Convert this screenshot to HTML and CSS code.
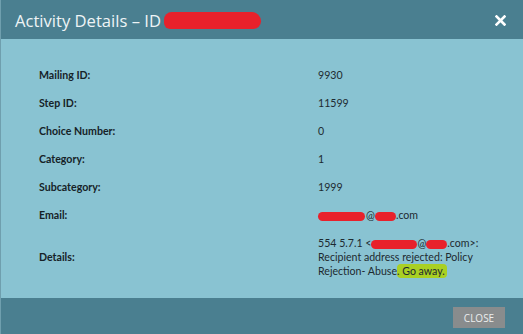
FILE: index.html
```html
<!DOCTYPE html>
<html lang="en">

<head>
    <meta charset="UTF-8" />
    <meta name="viewport" content="width=device-width, initial-scale=1.0" />
    <title>Activity Details</title>
    <link rel="stylesheet" href="styles.css">
</head>

<body>
    <div class="dialog">
        <div class="dialog-header">
            <h1 class="title">Activity Details – ID <span class="scribble scribble-title"></span></h1>
            <button class="close-x" aria-label="Close">
                <svg width="11" height="11" viewBox="0 0 11 11">
                    <path d="M1.5 1.5 L9.5 9.5 M9.5 1.5 L1.5 9.5" stroke="#fff" stroke-width="2.6" stroke-linecap="square" />
                </svg>
            </button>
        </div>

        <div class="dialog-body">
            <div class="details">
                <div class="label">Mailing ID:</div>
                <div class="value">9930</div>

                <div class="label">Step ID:</div>
                <div class="value">11599</div>

                <div class="label">Choice Number:</div>
                <div class="value">0</div>

                <div class="label">Category:</div>
                <div class="value">1</div>

                <div class="label">Subcategory:</div>
                <div class="value">1999</div>

                <div class="label">Email:</div>
                <div class="value"><span class="scribble scribble-user"></span>@<span class="scribble scribble-domain"></span>.com</div>

                <div class="label">Details:</div>
                <div class="value">554 5.7.1 &lt;<span class="scribble scribble-user2"></span>@<span class="scribble scribble-domain2"></span>.com&gt;:<br>Recipient address rejected: Policy<br>Rejection- Abuse<span class="highlight">. Go away.</span></div>
            </div>
        </div>

        <div class="dialog-footer">
            <button class="btn-close">CLOSE</button>
        </div>
    </div>
</body>

</html>
```

FILE: styles.css
```css
* {
    margin: 0;
    padding: 0;
    box-sizing: border-box;
}

body {
    font-family: 'Open Sans', sans-serif;
    width: 523px;
    height: 334px;
    overflow: hidden;
}

.dialog {
    display: flex;
    flex-direction: column;
    height: 334px;
    background: #89c3d2;
    border-left: 1px solid #6f9fae;
}

.dialog-header {
    height: 39px;
    background: #4a7f90;
    display: flex;
    align-items: center;
    justify-content: space-between;
    padding: 0 17px 0 14px;
}

.title {
    font-size: 16.6px;
    font-weight: 400;
    color: #eef4f6;
    display: flex;
    align-items: center;
    gap: 3px;
    padding-top: 1px;
}

.close-x {
    background: none;
    border: none;
    display: flex;
    cursor: pointer;
    margin-top: 2px;
}

.scribble {
    display: inline-block;
    background: #e8212b;
    border-radius: 9px;
    vertical-align: middle;
}

.scribble-title {
    width: 97px;
    height: 17px;
    border-radius: 10px 12px 10px 8px;
}

.scribble-user {
    width: 47px;
    height: 9px;
    margin-right: 1px;
}

.scribble-domain {
    width: 21px;
    height: 9px;
}

.scribble-user2 {
    width: 46px;
    height: 9px;
}

.scribble-domain2 {
    width: 21px;
    height: 9px;
}

.dialog-body {
    flex: 1;
    padding: 22px 0 0 38px;
}

.details {
    display: grid;
    grid-template-columns: 279px 180px;
    font-family: 'Lato', sans-serif;
    font-size: 10.6px;
    line-height: 14px;
    color: #1d2a30;
}

.label,
.value {
    padding: 7px 0;
    display: flex;
    align-items: center;
}

.label {
    font-weight: 700;
    color: #162227;
}

.value {
    display: block;
    white-space: nowrap;
}

.highlight {
    background: #a9d023;
    border-radius: 4px;
    padding: 1px 2px 1px 0;
}

.dialog-footer {
    height: 36px;
    background: #4a7f90;
    display: flex;
    justify-content: flex-end;
    align-items: flex-start;
    padding: 9px 18px 0 0;
}

.btn-close {
    width: 52px;
    height: 21px;
    border: none;
    background: #898c8d;
    color: #eceeee;
    font-family: 'Open Sans', sans-serif;
    font-size: 10px;
    cursor: pointer;
}
```
